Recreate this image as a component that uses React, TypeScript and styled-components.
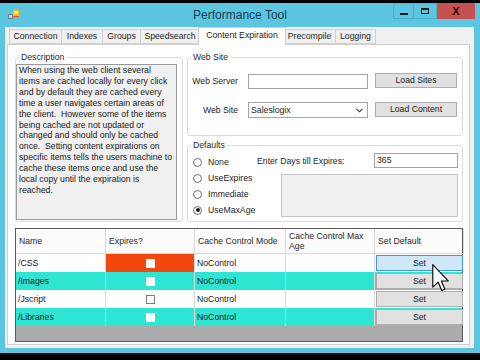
import React from 'react';
import styled, { createGlobalStyle } from 'styled-components';

const GlobalStyle = createGlobalStyle`
  html, body {
    margin: 0;
    padding: 0;
    background: #000;
  }
  body {
    font-family: "Liberation Sans", Arial, sans-serif;
    color: #1e1e1e;
  }
`;

const Screen = styled.div`
  position: relative;
  width: 480px;
  height: 360px;
  padding-top: 3px;
  box-sizing: border-box;
  background: #000;
  overflow: hidden;
`;

const Window = styled.div`
  height: 350px;
  display: flex;
  flex-direction: column;
  background: #5cc6e0;
`;

const TitleBar = styled.div`
  height: 24px;
  display: grid;
  grid-template-columns: 1fr auto 1fr;
  align-items: start;
`;

const AppIcon = styled.div`
  padding: 7px 0 0 8px;
  line-height: 0;
`;

const Title = styled.div`
  font-size: 12px;
  line-height: 24px;
  color: #173a56;
`;

const Controls = styled.div`
  justify-self: end;
  display: flex;
  padding-right: 5px;
`;

const WinButton = styled.div<{ $w: number; $close?: boolean }>`
  width: ${(p) => p.$w}px;
  height: 16px;
  box-sizing: border-box;
  display: flex;
  align-items: center;
  justify-content: center;
  background: ${(p) => (p.$close ? '#c75050' : 'transparent')};
  border: 1px solid ${(p) => (p.$close ? '#c75050' : '#4eb2cc')};
  border-left-width: ${(p) => (p.$close ? 1 : 0)}px;
  &:first-child {
    border-left-width: 1px;
  }
`;

const MinGlyph = styled.span`
  width: 8px;
  height: 2px;
  margin-top: 5px;
  background: #1a1a1a;
`;

const MaxGlyph = styled.span`
  width: 8px;
  height: 6px;
  box-sizing: border-box;
  border: 1px solid #1a1a1a;
  border-top-width: 2px;
`;

const CloseGlyph = styled.span`
  font-size: 11px;
  font-weight: bold;
  color: #2a0c0c;
  line-height: 1;
`;

const Client = styled.div`
  flex: 1;
  margin: 0 6px 5px 5px;
  background: #f0f0f0;
  display: flex;
  flex-direction: column;
  min-height: 0;
`;

const TabStrip = styled.div`
  height: 17px;
  display: flex;
  align-items: flex-end;
  padding-left: 4px;
  position: relative;
  z-index: 1;
`;

const Tab = styled.div<{ $w: number; $active?: boolean }>`
  width: ${(p) => p.$w + (p.$active ? 4 : 0)}px;
  height: ${(p) => (p.$active ? 18 : 15)}px;
  margin: 0 ${(p) => (p.$active ? -2 : 0)}px ${(p) => (p.$active ? -1 : 0)}px;
  box-sizing: border-box;
  border: 1px solid #d0d0d0;
  border-bottom: ${(p) => (p.$active ? 'none' : '1px solid #d0d0d0')};
  border-left-width: ${(p) => (p.$active ? 1 : 0)}px;
  background: ${(p) => (p.$active ? '#fff' : '#f0f0f0')};
  position: relative;
  z-index: ${(p) => (p.$active ? 2 : 0)};
  font-size: 8.7px;
  line-height: ${(p) => (p.$active ? 15 : 13)}px;
  text-align: center;
  white-space: nowrap;
  &:first-child {
    border-left-width: 1px;
  }
`;

const TabPage = styled.div`
  flex: 1;
  margin: 0 4px 3px 2px;
  border: 1px solid #d0d0d0;
  background: #fff;
  padding: 7px 5px 0 7px;
  display: grid;
  grid-template-columns: 168px 276px;
  grid-template-rows: 84px 82px auto;
  column-gap: 4px;
  row-gap: 4px;
  align-content: start;
`;

const Group = styled.fieldset<{ $span?: boolean }>`
  margin: 0;
  padding: 0;
  min-width: 0;
  box-sizing: border-box;
  border: 1px solid #dcdcdc;
  border-radius: 3px;
  grid-row: ${(p) => (p.$span ? '1 / 3' : 'auto')};
  display: flex;
  flex-direction: column;
`;

const Legend = styled.legend`
  margin-left: 3px;
  padding: 0 2px;
  font-size: 8.7px;
  line-height: 11px;
  color: #2a2a2a;
`;

const DescBox = styled.div`
  flex: 1;
  margin: 1px 5px 1px 0;
  border: 1px solid #9a9a9a;
  background: #f0f0f0;
  padding: 0 2px;
  font-size: 8.7px;
  line-height: 10.9px;
  color: #1a1a1a;
`;

const DescLine = styled.div`
  white-space: pre;
`;

const SiteBody = styled.div`
  padding-top: 10px;
  display: flex;
  flex-direction: column;
  gap: 13px;
`;

const FieldRow = styled.div`
  display: flex;
  align-items: center;
  height: 16px;
`;

const FieldLabel = styled.div`
  width: 50px;
  margin-right: 10px;
  text-align: right;
  font-size: 8.7px;
  white-space: nowrap;
`;

const TextInput = styled.div<{ $w: number }>`
  width: ${(p) => p.$w}px;
  height: 15px;
  box-sizing: border-box;
  border: 1px solid #a4a4a4;
  background: #fff;
  font-size: 8.7px;
  line-height: 13px;
  padding-left: 2px;
`;

const Combo = styled.div`
  width: 120px;
  height: 16px;
  box-sizing: border-box;
  border: 1px solid #a4a4a4;
  background: #fff;
  display: flex;
  align-items: center;
  justify-content: space-between;
  padding: 0 4px 0 2px;
  font-size: 8.7px;
`;

const Button = styled.div`
  width: 82px;
  height: 15px;
  margin-left: 7px;
  box-sizing: border-box;
  border: 1px solid #adadad;
  background: #e1e1e1;
  font-size: 8.7px;
  line-height: 13px;
  text-align: center;
  align-self: flex-start;
`;

const DefaultsBody = styled.div`
  display: flex;
  padding-top: 2px;
`;

const RadioList = styled.div`
  width: 64px;
  margin-left: 5px;
  padding-top: 1px;
  display: flex;
  flex-direction: column;
`;

const RadioRow = styled.div`
  height: 16px;
  display: flex;
  align-items: center;
  gap: 6px;
  font-size: 8.7px;
  white-space: nowrap;
`;

const RadioDot = styled.span<{ $checked?: boolean }>`
  width: 9px;
  height: 9px;
  border-radius: 50%;
  box-sizing: border-box;
  border: 1px solid #6e6e6e;
  background: #fff;
  display: flex;
  align-items: center;
  justify-content: center;
  &::after {
    content: '';
    width: 4px;
    height: 4px;
    border-radius: 50%;
    background: ${(p) => (p.$checked ? '#1a1a1a' : 'transparent')};
  }
`;

const RightPanel = styled.div`
  flex: 1;
  margin-right: 4px;
  display: flex;
  flex-direction: column;
  gap: 6px;
`;

const DaysRow = styled.div`
  display: flex;
  align-items: center;
  justify-content: space-between;
  font-size: 8.7px;
`;

const NoteBox = styled.div`
  margin-left: 24px;
  height: 43px;
  box-sizing: border-box;
  border: 1px solid #c4c4c4;
  background: #f0f0f0;
`;

const DataGrid = styled.div`
  grid-column: 1 / -1;
  margin-top: 2px;
  height: 114px;
  box-sizing: border-box;
  border: 1px solid #5a5a5a;
  background: #ababab;
  display: flex;
  flex-direction: column;
`;

const GridRow = styled.div<{ $bg: string; $h: number }>`
  display: grid;
  grid-template-columns: 90px 89px 91px 89px 89px;
  height: ${(p) => p.$h}px;
  background: ${(p) => p.$bg};
  font-size: 8.7px;
`;

const HeadCell = styled.div`
  border-right: 1px solid #dadada;
  border-bottom: 1px solid #dadada;
  padding: 0 3px;
  display: flex;
  align-items: center;
  line-height: 10px;
  color: #2a2a2a;
`;

const Cell = styled.div<{ $bg?: string; $center?: boolean }>`
  border-right: 1px solid #dadada;
  background: ${(p) => p.$bg ?? 'transparent'};
  padding: 0 2px;
  display: flex;
  align-items: center;
  justify-content: ${(p) => (p.$center ? 'center' : 'flex-start')};
  color: #1a1a1a;
  white-space: nowrap;
`;

const Check = styled.span<{ $outlined?: boolean }>`
  width: 9px;
  height: 9px;
  box-sizing: border-box;
  background: #fff;
  border: 1px solid ${(p) => (p.$outlined ? '#7a7a7a' : '#fff')};
`;

const SetCell = styled.div`
  padding: 1px;
  display: flex;
`;

const SetButton = styled.div<{ $hover?: boolean }>`
  flex: 1;
  box-sizing: border-box;
  border: 1px solid ${(p) => (p.$hover ? '#3c9be0' : '#adadad')};
  background: ${(p) => (p.$hover ? '#cfe7f8' : '#e1e1e1')};
  display: flex;
  align-items: center;
  justify-content: center;
`;

const Cursor = styled.svg`
  position: absolute;
  left: 432px;
  top: 264px;
`;

const tabs = [
  { label: 'Connection', w: 53 },
  { label: 'Indexes', w: 41 },
  { label: 'Groups', w: 38 },
  { label: 'Speedsearch', w: 59 },
  { label: 'Content Expiration', w: 84, active: true },
  { label: 'Precompile', w: 52 },
  { label: 'Logging', w: 40 },
];

const description = [
  'When using the web client several',
  'items are cached locally for every click',
  'and by default they are cached every',
  'time a user navigates certain areas of',
  'the client.  However some of the items',
  'being cached are not updated or',
  'changed and should only be cached',
  'once.  Setting content expirations on',
  'specific items tells the users machine to',
  'cache these items once and use the',
  'local copy until the expiration is',
  'reached.',
];

const radios = [
  { label: 'None' },
  { label: 'UseExpires' },
  { label: 'Immediate' },
  { label: 'UseMaxAge', checked: true },
];

const CYAN = '#2ee5d4';

const rows = [
  { name: '/CSS', bg: '#fff', expiresBg: '#f2480e', hover: true },
  { name: '/Images', bg: CYAN },
  { name: '/Jscript', bg: '#fff', outlined: true },
  { name: '/Libraries', bg: CYAN },
];

export default function App() {
  return (
    <Screen>
      <GlobalStyle />
      <Window>
        <TitleBar>
          <AppIcon>
            <svg width="11" height="9" viewBox="0 0 11 9">
              <rect x="0" y="4" width="5" height="5" fill="#6f7f9a" />
              <rect x="1" y="5" width="3" height="3" fill="#c8d4e6" />
              <rect x="5" y="0" width="6" height="7" fill="#f5c21a" />
              <rect x="6" y="1" width="4" height="3" fill="#fbe37a" />
              <rect x="5" y="6" width="6" height="1" fill="#e05a1a" />
            </svg>
          </AppIcon>
          <Title>Performance Tool</Title>
          <Controls>
            <WinButton $w={21}>
              <MinGlyph />
            </WinButton>
            <WinButton $w={23}>
              <MaxGlyph />
            </WinButton>
            <WinButton $w={38} $close>
              <CloseGlyph>X</CloseGlyph>
            </WinButton>
          </Controls>
        </TitleBar>
        <Client>
          <TabStrip>
            {tabs.map((t) => (
              <Tab key={t.label} $w={t.w} $active={t.active}>
                {t.label}
              </Tab>
            ))}
          </TabStrip>
          <TabPage>
            <Group $span>
              <Legend>Description</Legend>
              <DescBox>
                {description.map((l, i) => (
                  <DescLine key={i}>{l}</DescLine>
                ))}
              </DescBox>
            </Group>
            <Group>
              <Legend>Web Site</Legend>
              <SiteBody>
                <FieldRow>
                  <FieldLabel>Web Server</FieldLabel>
                  <TextInput $w={120} style={{ marginTop: 1 }} />
                  <Button>Load Sites</Button>
                </FieldRow>
                <FieldRow>
                  <FieldLabel>Web Site</FieldLabel>
                  <Combo>
                    <span>Saleslogix</span>
                    <svg width="7" height="5" viewBox="0 0 7 5">
                      <path d="M0.5 0.8 L3.5 3.8 L6.5 0.8" stroke="#333" strokeWidth="1.1" fill="none" />
                    </svg>
                  </Combo>
                  <Button>Load Content</Button>
                </FieldRow>
              </SiteBody>
            </Group>
            <Group>
              <Legend>Defaults</Legend>
              <DefaultsBody>
                <RadioList>
                  {radios.map((r) => (
                    <RadioRow key={r.label}>
                      <RadioDot $checked={r.checked} />
                      {r.label}
                    </RadioRow>
                  ))}
                </RadioList>
                <RightPanel>
                  <DaysRow>
                    <span>Enter Days till Expires:</span>
                    <TextInput $w={84}>365</TextInput>
                  </DaysRow>
                  <NoteBox />
                </RightPanel>
              </DefaultsBody>
            </Group>
            <DataGrid>
              <GridRow $bg="#fbfbfb" $h={25}>
                <HeadCell>Name</HeadCell>
                <HeadCell>Expires?</HeadCell>
                <HeadCell>Cache Control Mode</HeadCell>
                <HeadCell>
                  Cache Control Max
                  <br />
                  Age
                </HeadCell>
                <HeadCell>Set Default</HeadCell>
              </GridRow>
              {rows.map((r) => (
                <GridRow key={r.name} $bg={r.bg} $h={18}>
                  <Cell>{r.name}</Cell>
                  <Cell $bg={r.expiresBg} $center>
                    <Check $outlined={r.outlined} />
                  </Cell>
                  <Cell>NoControl</Cell>
                  <Cell />
                  <SetCell>
                    <SetButton $hover={r.hover}>Set</SetButton>
                  </SetCell>
                </GridRow>
              ))}
            </DataGrid>
          </TabPage>
        </Client>
      </Window>
      <Cursor width="17" height="28" viewBox="0 0 12 20">
        <path
          d="M0.5 0.5 L0.5 16.5 L4.3 12.9 L6.9 18.9 L9.1 18 L6.6 12.1 L11.5 12.1 Z"
          fill="#fff"
          stroke="#000"
          strokeWidth="0.8"
          strokeLinejoin="round"
        />
      </Cursor>
    </Screen>
  );
}
